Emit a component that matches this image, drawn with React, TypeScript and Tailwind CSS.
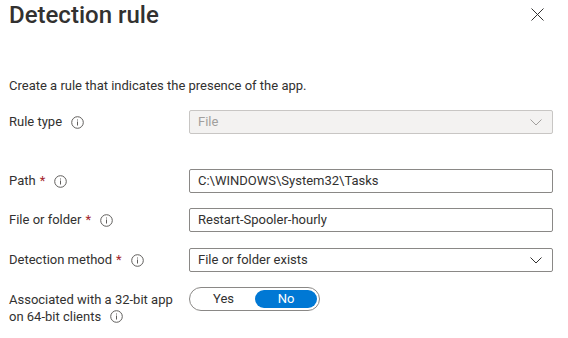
import React from "react";

const Info = () => (
  <svg width="13" height="13" viewBox="0 0 13 13" className="shrink-0">
    <circle cx="6.5" cy="6.5" r="5.8" fill="none" stroke="#605e5c" strokeWidth="1" />
    <rect x="6" y="5.5" width="1" height="4" fill="#605e5c" />
    <rect x="6" y="3.5" width="1" height="1" fill="#605e5c" />
  </svg>
);

const Chevron = ({ color }: { color: string }) => (
  <svg width="12" height="7" viewBox="0 0 12 7">
    <path d="M0.5 0.5 L6 6 L11.5 0.5" fill="none" stroke={color} strokeWidth="1" />
  </svg>
);

const Label = ({ text, req }: { text: string; req?: boolean }) => (
  <div className="w-[180px] flex items-center text-[13px] text-[#323130]">
    <span>{text}</span>
    {req && <span className="text-[#a4262c] ml-[4px]">*</span>}
    <span className="ml-[9px] flex items-center">
      <Info />
    </span>
  </div>
);

export default function App() {
  return (
    <div
      className="w-[568px] h-[338px] bg-white relative overflow-hidden text-[#323130]"
      style={{ fontFamily: 'Roboto, "Open Sans", sans-serif' }}
    >
      <div className="pl-[9px] pr-[15px]">
        <div className="flex items-center justify-between h-[30px]">
          <h1 className="text-[24px] font-medium leading-[30px] text-[#323130]">
            Detection rule
          </h1>
          <svg width="13" height="13" viewBox="0 0 13 13" className="mr-[9px] mb-[2px]">
            <path d="M0.5 0.5 L12.5 12.5 M12.5 0.5 L0.5 12.5" stroke="#323130" strokeWidth="1" />
          </svg>
        </div>
        <p className="mt-[47px] text-[13px] leading-[18px]">
          Create a rule that indicates the presence of the app.
        </p>
        <div className="flex items-center mt-[15px] h-[24px]">
          <div className="w-[180px] flex items-center text-[13px]">
            <span>Rule type</span>
            <span className="ml-[9px] flex items-center">
              <Info />
            </span>
          </div>
          <div className="w-[364px] h-[24px] bg-[#f3f2f1] border border-[#c8c6c4] rounded-[2px] flex items-center justify-between pl-[8px] pr-[10px] text-[13px] text-[#a19f9d]">
            <span>File</span>
            <Chevron color="#a19f9d" />
          </div>
        </div>
        <div className="flex items-center mt-[35px] h-[24px]">
          <Label text="Path" req />
          <div className="w-[364px] h-[24px] border border-[#8a8886] rounded-[2px] flex items-center pl-[8px] text-[13px]">
            C:\WINDOWS\System32\Tasks
          </div>
        </div>
        <div className="flex items-center mt-[15px] h-[24px]">
          <Label text="File or folder" req />
          <div className="w-[364px] h-[24px] border border-[#8a8886] rounded-[2px] flex items-center pl-[8px] text-[13px]">
            Restart-Spooler-hourly
          </div>
        </div>
        <div className="flex items-center mt-[16px] h-[24px]">
          <Label text="Detection method" req />
          <div className="w-[364px] h-[24px] border border-[#8a8886] rounded-[2px] flex items-center justify-between pl-[8px] pr-[10px] text-[13px]">
            <span>File or folder exists</span>
            <Chevron color="#323130" />
          </div>
        </div>
        <div className="flex items-start mt-[15px]">
          <div className="w-[180px] text-[13px] leading-[17px] pt-[4px]">
            <div>Associated with a 32-bit app</div>
            <div className="flex items-center">
              <span>on 64-bit clients</span>
              <span className="ml-[9px] flex items-center">
                <Info />
              </span>
            </div>
          </div>
          <div className="w-[131px] h-[24px] border border-[#8a8886] rounded-full flex items-center p-[2px] text-[13px]">
            <div className="flex-1 h-full flex items-center justify-center text-[#323130]">Yes</div>
            <div className="w-[62px] h-full rounded-full bg-[#0078d4] text-white flex items-center justify-center">
              No
            </div>
          </div>
        </div>
      </div>
    </div>
  );
}
